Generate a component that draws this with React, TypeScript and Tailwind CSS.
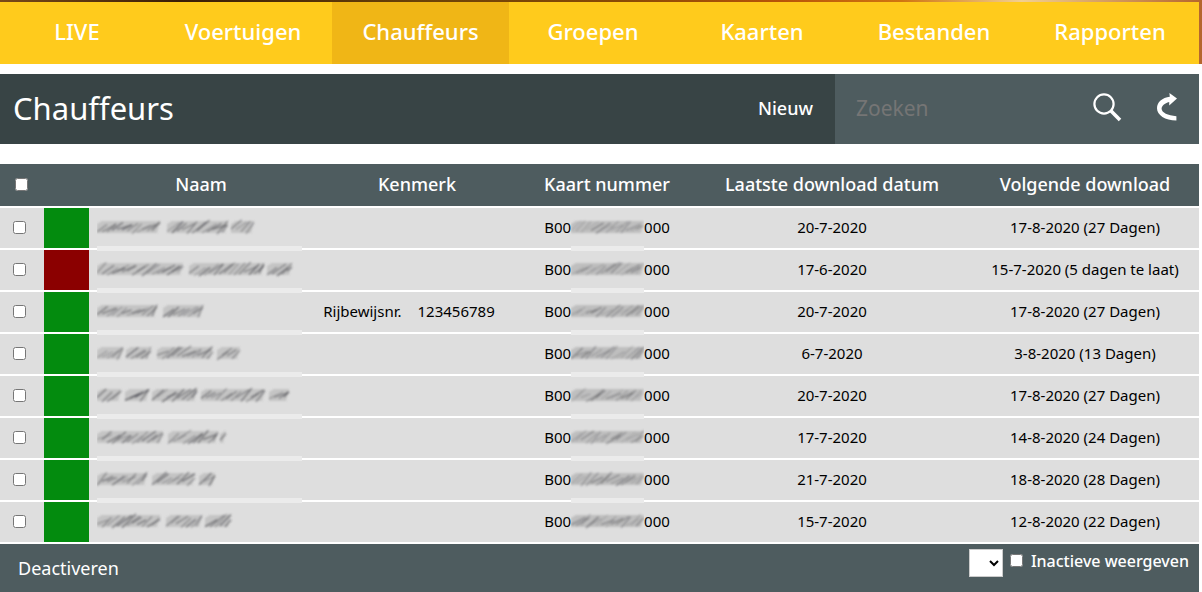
const navItems = [
  { label: "LIVE", width: "flex-[154]" },
  { label: "Voertuigen", width: "flex-[178]" },
  { label: "Chauffeurs", width: "flex-[177]", active: true },
  { label: "Groepen", width: "flex-[168]" },
  { label: "Kaarten", width: "flex-[170]" },
  { label: "Bestanden", width: "flex-[174]" },
  { label: "Rapporten", width: "flex-[178]" },
];

// name: start and end of each hidden word
const drivers = [
  { name: [[0, 63], [70, 131], [134, 157]], download: "20-7-2020", next: "17-8-2020 (27 Dagen)" },
  { name: [[0, 86], [92, 167], [170, 195]], download: "17-6-2020", next: "15-7-2020 (5 dagen te laat)", late: true },
  { name: [[0, 60], [66, 106]], mark: "123456789", download: "20-7-2020", next: "17-8-2020 (27 Dagen)" },
  { name: [[0, 26], [29, 54], [60, 116], [120, 143]], download: "6-7-2020", next: "3-8-2020 (13 Dagen)" },
  { name: [[0, 24], [28, 52], [55, 100], [104, 168], [172, 192]], download: "20-7-2020", next: "17-8-2020 (27 Dagen)" },
  { name: [[0, 66], [71, 121], [123, 129]], download: "17-7-2020", next: "14-8-2020 (24 Dagen)" },
  { name: [[0, 50], [55, 98], [102, 118]], download: "21-7-2020", next: "18-8-2020 (28 Dagen)" },
  { name: [[0, 63], [69, 105], [108, 134]], download: "15-7-2020", next: "12-8-2020 (22 Dagen)" },
];

// Smeared strokes in place of private data
function Smudge({ words, width, seed, light }: { words: number[][]; width: number; seed: number; light?: boolean }) {
  const noise = (n: number) => {
    const v = Math.sin(n * 12.9898 + seed * 78.233) * 43758.5453;
    return v - Math.floor(v);
  };
  return (
    <svg width={width} height="20" viewBox={`0 0 ${width} 20`} className="block shrink-0" role="img" aria-label="Afgeschermd">
      <defs>
        <filter id={`smear-${width}`} x="-5%" y="-20%" width="110%" height="140%">
          <feGaussianBlur stdDeviation="0.8" />
        </filter>
      </defs>
      <g filter={`url(#smear-${width})`}>
        {words.map(([start, end]) => (
          <g key={start}>
            <path d={`M${start} 16L${start} 7L${start + 5} 4H${end}L${end - 3} 16Z`} fill="#777777" opacity={light ? 0.3 : 0.25} />
            {Array.from({ length: Math.max(1, Math.floor((end - start) / 5)) }, (_, i) => {
              const x = start + i * 5;
              const top = 3 + noise(x + 1) * 6;
              const bottom = 12 + noise(x + 2) * 5;
              return (
                <path
                  key={i}
                  d={`M${x} ${bottom}L${Math.min(end, x + 9 + noise(x) * 6)} ${top}`}
                  stroke="#3c3c42"
                  strokeWidth="1.4"
                  opacity={(light ? 0.1 : 0.25) + noise(x + 3) * 0.4}
                />
              );
            })}
          </g>
        ))}
      </g>
    </svg>
  );
}

export default function App() {
  return (
    <div className="min-h-full bg-white font-['Noto_Sans',sans-serif] text-black">
      <div className="bg-[linear-gradient(90deg,#7a4a18,#3a1d06_15%,#6b4208_35%,#8a4a05_52%,#b85408_65%,#d07510_75%,#f2cf90_85%,#b5652c)] pt-[2px] pr-[3px]">
        <nav className="flex h-[62px] bg-[#ffcb1c] text-[22px] font-medium text-white">
          {navItems.map((item) => (
            <a
              key={item.label}
              href="#"
              className={`flex items-center justify-center pb-1 ${item.width} ${item.active ? "bg-[#f0b616]" : ""}`}
            >
              {item.label}
            </a>
          ))}
        </nav>
      </div>

      <main className="pt-[10px] pr-[3px]">
        <header className="mb-5 flex h-[70px] items-stretch bg-[#384445] text-white">
          <h1 className="flex flex-1 items-center pb-[2px] pl-[13px] text-[31px]">Chauffeurs</h1>
          <button type="button" className="px-[22px] pb-[2px] text-lg font-medium">Nieuw</button>
          <form className="flex w-[364px] items-center bg-[#4e5c5f] pr-[22px]">
            <input
              type="text"
              placeholder="Zoeken"
              aria-label="Zoeken"
              className="h-full min-w-0 flex-1 bg-transparent pb-[2px] pl-[21px] text-[21px] outline-none placeholder:text-[#757575]"
            />
            <button type="button" aria-label="Zoek" className="mr-[35px] pb-1">
              <svg width="29" height="29" viewBox="0 0 29 29" fill="none" stroke="#fff">
                <circle cx="11" cy="11" r="9.6" strokeWidth="2.2" />
                <path d="M17.6 17.6L27 27" strokeWidth="3.6" />
              </svg>
            </button>
            <button type="button" aria-label="Vernieuwen" className="pb-1">
              <svg width="20" height="28" viewBox="0 0 20 28" fill="#fff">
                <path d="M12.4 0L20 5.6L12.2 12.6V9C7.5 10.5 4.6 12.8 4.6 15.8C4.6 19.5 10.8 22.8 19.4 23.2V27.4C8 27.4 0 22 0 15.2C0 9.2 5.3 4.6 12.8 3.8Z" />
              </svg>
            </button>
          </form>
        </header>

        <table className="w-full table-fixed border-separate border-spacing-0 text-center">
          <colgroup>
            <col className="w-[44px]" />
            <col className="w-[45px]" />
            <col className="w-[224px]" />
            <col className="w-[208px]" />
            <col className="w-[172px]" />
            <col className="w-[278px]" />
            <col />
          </colgroup>
          <thead>
            <tr className="h-[44px] bg-[#4e5c5f] text-lg text-white *:border-b-2 *:border-white *:p-0 *:pb-[2px] *:font-medium">
              <th>
                <input type="checkbox" aria-label="Alles selecteren" className="ml-[15px] block size-[13px]" />
              </th>
              <th></th>
              <th>Naam</th>
              <th>Kenmerk</th>
              <th>Kaart nummer</th>
              <th>Laatste download datum</th>
              <th>Volgende download</th>
            </tr>
          </thead>
          <tbody>
            {drivers.map((driver, i) => (
              <tr key={i} className="h-[42px] bg-[#dedede] text-[15px] *:border-b-2 *:border-white *:p-0 *:pb-[2px]">
                <td>
                  <input type="checkbox" aria-label={`Chauffeur ${i + 1} selecteren`} className="ml-[13px] block size-[13px]" />
                </td>
                <td className={driver.late ? "bg-[#8b0000]" : "bg-[#038b0e]"}></td>
                <td className="relative">
                  <div className="ml-2">
                    <Smudge words={driver.name} width={205} seed={i + 1} />
                  </div>
                  {i < drivers.length - 1 && <div className="absolute -bottom-[3px] left-2 h-[5px] w-[205px] bg-[#ebebeb]"></div>}
                </td>
                <td>
                  {driver.mark && (
                    <div className="flex justify-center gap-4 pr-4">
                      <span>Rijbewijsnr.</span>
                      <span>{driver.mark}</span>
                    </div>
                  )}
                </td>
                <td>
                  <div className="flex items-center justify-center">
                    <span>B00</span>
                    <div className="relative">
                      <Smudge words={[[0, 73]]} width={73} seed={i + 20} light />
                      {i < drivers.length - 1 && <div className="absolute top-[29px] left-0 h-[5px] w-full bg-[#ebebeb]"></div>}
                    </div>
                    <span>000</span>
                  </div>
                </td>
                <td>{driver.download}</td>
                <td>{driver.next}</td>
              </tr>
            ))}
          </tbody>
        </table>

        <footer className="flex h-12 items-center justify-between bg-[#4e5c5f] pr-[10px] pl-[18px] text-white">
          <button type="button" className="text-lg">Deactiveren</button>
          <div className="flex items-start pb-[10px] text-base font-medium">
            <select aria-label="Pagina" className="mr-[7px] h-7 w-[34px] border border-[#cccccc] bg-white text-black">
              <option></option>
            </select>
            <input id="inactive" type="checkbox" className="mt-[5px] mr-2 size-[13px]" />
            <label htmlFor="inactive">Inactieve weergeven</label>
          </div>
        </footer>
      </main>
    </div>
  );
}
